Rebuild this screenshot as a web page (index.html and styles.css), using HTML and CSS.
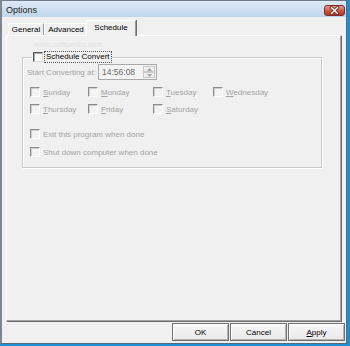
FILE: index.html
```html
<!DOCTYPE html>
<html lang="en">
<head>
  <meta charset="UTF-8">
  <title>Options</title>
  <link rel="stylesheet" href="styles.css">
</head>
<body>

  <div class="window">
    <div class="titlebar">
      <span class="title">Options</span>
      <span class="close">
        <svg width="11" height="9" viewBox="0 0 11 9">
          <path d="M2.5 1.5 L8.5 7.5 M8.5 1.5 L2.5 7.5" stroke="#6a1e16" stroke-width="3" stroke-linecap="square"/>
          <path d="M2.5 1.5 L8.5 7.5 M8.5 1.5 L2.5 7.5" stroke="#ffffff" stroke-width="1.5" stroke-linecap="square"/>
        </svg>
      </span>
    </div>

    <div class="client">
      <div class="tabs">
        <span class="tab tab-general">General</span>
        <span class="tab tab-advanced">Advanced</span>
        <span class="tab active">Schedule</span>
      </div>

      <div class="panel">
        <div class="watermark">www.softpedia.com</div>

        <fieldset class="group">
          <legend><span class="check on"></span><span class="focus">Schedule Convert</span></legend>

          <div class="time-row">
            <span class="label">Start Converting at:</span>
            <span class="time-box">
              <span class="time">14:56:08</span>
              <span class="spin">
                <span class="spin-btn"><svg width="5" height="3" viewBox="0 0 5 3"><path d="M0 3 L2.5 0 L5 3 Z" fill="#a0a0a0"/></svg></span>
                <span class="spin-btn"><svg width="5" height="3" viewBox="0 0 5 3"><path d="M0 0 L2.5 3 L5 0 Z" fill="#a0a0a0"/></svg></span>
              </span>
            </span>
          </div>

          <div class="days">
            <span class="item"><span class="check"></span><span><u>S</u>unday</span></span>
            <span class="item"><span class="check"></span><span><u>M</u>onday</span></span>
            <span class="item"><span class="check"></span><span><u>T</u>uesday</span></span>
            <span class="item"><span class="check"></span><span><u>W</u>ednesday</span></span>
            <span class="item"><span class="check"></span><span><u>T</u>hursday</span></span>
            <span class="item"><span class="check"></span><span><u>F</u>riday</span></span>
            <span class="item"><span class="check"></span><span><u>S</u>aturday</span></span>
          </div>

          <div class="options">
            <span class="item"><span class="check"></span><span>Exit this program when done</span></span>
            <span class="item"><span class="check"></span><span>Shut down computer when done</span></span>
          </div>
        </fieldset>
      </div>

      <div class="buttons">
        <button class="btn">OK</button>
        <button class="btn">Cancel</button>
        <button class="btn"><u>A</u>pply</button>
      </div>
    </div>
  </div>

</body>
</html>
```

FILE: styles.css
```css
html, body {
margin: 0;
padding: 0;
}

body {
width: 350px;
height: 346px;
background-color: #1f8ed3;
font-family: 'Liberation Sans', Arial, sans-serif;
font-size: 8px;
color: #000;
overflow: hidden;
}

.window {
box-sizing: border-box;
width: 347px;
height: 344px;
background-color: #f0f0f0;
border-top: 1px solid #6f7b86;
border-left: 2px solid #7c8792;
border-right: 1px solid #5f6770;
border-bottom: 1px solid #5f6770;
}

/* title bar */
.titlebar {
height: 16px;
display: flex;
align-items: center;
justify-content: space-between;
padding: 0 1px 0 4px;
background: linear-gradient(to bottom, #dde8f4, #c0d6ed);
}

.title {
font-size: 9px;
color: #1b1b1b;
padding-top: 1px;
}

.close {
box-sizing: border-box;
width: 21px;
height: 11px;
margin-top: 2px;
display: flex;
align-items: center;
justify-content: center;
border: 1px solid #7e2c22;
border-radius: 3px;
background: linear-gradient(to bottom, #e3a197, #cb5a4b 50%, #b8382a);
}

.close svg {
display: block;
}

/* client area */
.client {
padding: 3px 5px 0 4px;
}

.tabs {
display: flex;
align-items: flex-end;
height: 15px;
padding-left: 2px;
position: relative;
z-index: 1;
}

.tab {
box-sizing: border-box;
height: 12px;
line-height: 11px;
text-align: center;
border-top: 1px solid #fff;
border-left: 1px solid #fff;
border-right: 1px solid #9a9a9a;
}

.tab-general {
width: 36px;
box-shadow: 1px 0 0 #6e6e6e;
}

.tab-advanced {
width: 44px;
}

.tab.active {
width: 50px;
height: 16px;
margin-left: -2px;
margin-bottom: -1px;
padding-top: 1px;
line-height: 12px;
background-color: #f0f0f0;
box-shadow: 1px 0 0 #6e6e6e;
}

.panel {
box-sizing: border-box;
height: 286px;
border-top: 1px solid #fff;
border-left: 1px solid #fff;
border-right: 1px solid #a0a0a0;
border-bottom: 1px solid #a0a0a0;
box-shadow: 1px 1px 0 #6e6e6e;
}

.watermark {
height: 12px;
line-height: 12px;
margin-top: 3px;
padding-left: 27px;
color: #e2e2e2;
font-size: 8px;
}

/* group box */
.group {
box-sizing: border-box;
width: 300px;
margin: 0 0 0 15px;
padding: 0 4px 9px 4px;
border: 1px solid #c9c9c9;
box-shadow: 1px 1px 0 #fff, inset 1px 1px 0 #fff;
min-inline-size: 0;
}

.group legend {
display: flex;
align-items: center;
height: 12px;
margin-left: 5px;
padding: 0 1px;
}

.focus {
margin-left: 2px;
padding: 0 1px;
line-height: 10px;
outline: 1px dotted #555;
outline-offset: 0;
}

.check {
box-sizing: border-box;
display: inline-block;
width: 10px;
height: 10px;
flex: none;
background-color: #f3f3f3;
border-top: 1px solid #8c8c8c;
border-left: 1px solid #8c8c8c;
border-right: 1px solid #fff;
border-bottom: 1px solid #fff;
box-shadow: inset 1px 1px 0 #cfcfcf;
}

.check.on {
background-color: #fff;
border-top-color: #5a5a5a;
border-left-color: #5a5a5a;
border-right-color: #d8d8d8;
border-bottom-color: #d8d8d8;
box-shadow: inset 1px 1px 0 #a8a8a8;
}

.time-row {
display: flex;
align-items: center;
height: 16px;
margin-top: 1px;
}

.label {
color: #a3a3a3;
width: 71px;
}

.time-box {
box-sizing: border-box;
width: 59px;
height: 16px;
display: flex;
align-items: center;
justify-content: space-between;
padding: 0 1px 0 3px;
background-color: #f3f3f3;
border: 1px solid #a9a9a9;
}

.time {
color: #6d6d6d;
font-size: 8.5px;
}

.spin {
display: flex;
flex-direction: column;
width: 12px;
height: 12px;
}

.spin-btn {
box-sizing: border-box;
height: 6px;
display: flex;
align-items: center;
justify-content: center;
border: 1px solid #c9c9c9;
background-color: #f0f0f0;
}

.spin-btn svg {
display: block;
}

.item {
display: flex;
align-items: center;
gap: 3px;
height: 12px;
color: #a3a3a3;
white-space: nowrap;
}

.item u {
text-decoration-thickness: 1px;
}

.days {
display: grid;
grid-template-columns: 58px 65px 60px auto;
row-gap: 5px;
margin-top: 6px;
padding-left: 3px;
}

.options {
display: flex;
flex-direction: column;
gap: 6px;
margin-top: 13px;
padding-left: 3px;
}

/* dialog buttons */
.buttons {
display: flex;
justify-content: flex-end;
gap: 1px;
margin-top: 2px;
margin-right: -4px;
}

.btn {
box-sizing: border-box;
width: 57px;
height: 18px;
padding: 0;
font-family: 'Liberation Sans', Arial, sans-serif;
font-size: 8px;
color: #000;
background: linear-gradient(to bottom, #f6f6f6, #e9e9e9);
border: 1px solid #707070;
box-shadow: inset 1px 1px 0 #fff, inset -1px -1px 0 #b4b4b4;
}
```
